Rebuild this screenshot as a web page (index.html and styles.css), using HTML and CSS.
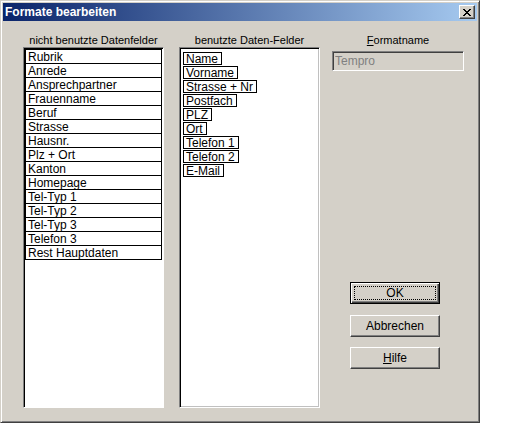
FILE: index.html
```html
<!DOCTYPE html>
<html lang="de">
<head>
    <meta charset="UTF-8">
    <title>Formate bearbeiten</title>
    <link rel="stylesheet" href="styles.css">
</head>
<body>
    <div class="dialog">
        <div class="titlebar">
            <span class="title">Formate bearbeiten</span>
            <button class="close-btn" type="button">
                <svg width="8" height="7" viewBox="0 0 8 7" shape-rendering="crispEdges">
                    <path fill="#000" d="M0 0h2v1h-2z M6 0h2v1h-2z M1 1h2v1h-2z M5 1h2v1h-2z M2 2h4v1h-4z M3 3h2v1h-2z M2 4h4v1h-4z M1 5h2v1h-2z M5 5h2v1h-2z M0 6h2v1h-2z M6 6h2v1h-2z"/>
                </svg>
            </button>
        </div>

        <div class="dialog-body">
            <!-- nicht benutzte Felder -->
            <div class="column">
                <div class="caption">nicht benutzte Datenfelder</div>
                <div class="listbox unused">
                    <div class="row">Rubrik</div>
                    <div class="row">Anrede</div>
                    <div class="row">Ansprechpartner</div>
                    <div class="row">Frauenname</div>
                    <div class="row">Beruf</div>
                    <div class="row">Strasse</div>
                    <div class="row">Hausnr.</div>
                    <div class="row">Plz + Ort</div>
                    <div class="row">Kanton</div>
                    <div class="row">Homepage</div>
                    <div class="row">Tel-Typ 1</div>
                    <div class="row">Tel-Typ 2</div>
                    <div class="row">Tel-Typ 3</div>
                    <div class="row">Telefon 3</div>
                    <div class="row">Rest Hauptdaten</div>
                </div>
            </div>

            <!-- benutzte Felder -->
            <div class="column">
                <div class="caption">benutzte Daten-Felder</div>
                <div class="listbox used">
                    <span class="field">Name</span>
                    <span class="field">Vorname</span>
                    <span class="field">Strasse + Nr</span>
                    <span class="field">Postfach</span>
                    <span class="field">PLZ</span>
                    <span class="field">Ort</span>
                    <span class="field">Telefon 1</span>
                    <span class="field">Telefon 2</span>
                    <span class="field">E-Mail</span>
                </div>
            </div>

            <!-- Formatname + Buttons -->
            <div class="side">
                <label class="caption" for="formatname"><u>F</u>ormatname</label>
                <input class="textfield" id="formatname" type="text" value="Tempro" disabled>
                <div class="buttons">
                    <button class="btn default" type="button"><span class="focus">OK</span></button>
                    <button class="btn" type="button"><span>Abbrechen</span></button>
                    <button class="btn" type="button"><span><u>H</u>ilfe</span></button>
                </div>
            </div>
        </div>
    </div>
</body>
</html>
```

FILE: styles.css
```css
* { margin: 0; padding: 0; box-sizing: border-box; }
body {
    background: #fff;
    font-family: "Liberation Sans", Arial, sans-serif;
    font-size: 12px;
    color: #000;
}
.dialog {
    width: 480px;
    height: 423px;
    background: #d4d0c8;
    border: 1px solid;
    border-color: #d4d0c8 #404040 #404040 #d4d0c8;
    box-shadow: inset 1px 1px #fff, inset -1px -1px #808080;
    padding: 2px;
    display: flex;
    flex-direction: column;
}
.titlebar {
    height: 18px;
    display: flex;
    align-items: center;
    justify-content: space-between;
    padding: 0 2px 0 2px;
    background: linear-gradient(to right, #0a246a, #a6caf0);
}
.title {
    color: #fff;
    font-weight: bold;
    font-size: 12px;
    line-height: 18px;
}
.close-btn {
    width: 16px;
    height: 14px;
    display: flex;
    align-items: center;
    justify-content: center;
    background: #d4d0c8;
    border: 1px solid;
    border-color: #fff #404040 #404040 #fff;
    box-shadow: inset -1px -1px #808080;
}
.dialog-body {
    flex: 1;
    display: flex;
    padding: 12px 0 0 20px;
    gap: 15px;
}
.column {
    width: 141px;
    display: flex;
    flex-direction: column;
}
.caption {
    display: block;
    height: 14px;
    line-height: 14px;
    font-size: 11px;
    text-align: center;
}
.listbox {
    height: 361px;
    background: #fff;
    border: 1px solid;
    padding: 1px;
}
.listbox.unused {
    border-color: #808080 #fff #fff #808080;
    box-shadow: inset 1px 1px #000;
}
.listbox.used {
    border-color: #808080 #fff #fff #808080;
    box-shadow: inset 1px 1px #000, inset -1px -1px #c0c0c0;
    display: flex;
    flex-direction: column;
    align-items: flex-start;
    gap: 1px;
    padding: 4px 0 0 3px;
}
.row {
    height: 14px;
    line-height: 14px;
    padding-left: 2px;
    border: 1px solid #000;
    border-top: none;
}
.row:first-child {
    height: 15px;
    border-top: 1px solid #000;
}
.field {
    display: block;
    height: 13px;
    line-height: 12px;
    padding: 0 3px 0 2px;
    border: 1px solid #000;
}
.side {
    width: 132px;
    margin-left: -3px;
    display: flex;
    flex-direction: column;
}
.textfield {
    margin-top: 4px;
    height: 20px;
    width: 132px;
    font-family: "Liberation Sans", Arial, sans-serif;
    font-size: 12px;
    color: #808080;
    background: #d4d0c8;
    padding-left: 2px;
    border: 1px solid;
    border-color: #808080 #fff #fff #808080;
    box-shadow: inset 1px 1px #404040, inset -1px -1px #d4d0c8;
}
.buttons {
    margin: 211px 0 0 18px;
    display: flex;
    flex-direction: column;
    gap: 10px;
}
.btn {
    width: 90px;
    height: 22px;
    background: #d4d0c8;
    font-family: "Liberation Sans", Arial, sans-serif;
    font-size: 12px;
    color: #000;
    border: 1px solid;
    border-color: #fff #404040 #404040 #fff;
    box-shadow: inset -1px -1px #808080;
    display: flex;
    align-items: center;
    justify-content: center;
}
.btn.default {
    margin-bottom: 1px;
    border-color: #000;
    box-shadow: inset 1px 1px #fff, inset -1px -1px #404040, inset -2px -2px #808080;
}
.btn .focus {
    width: 82px;
    height: 14px;
    line-height: 12px;
    text-align: center;
    border: 1px dotted #000;
}
```
